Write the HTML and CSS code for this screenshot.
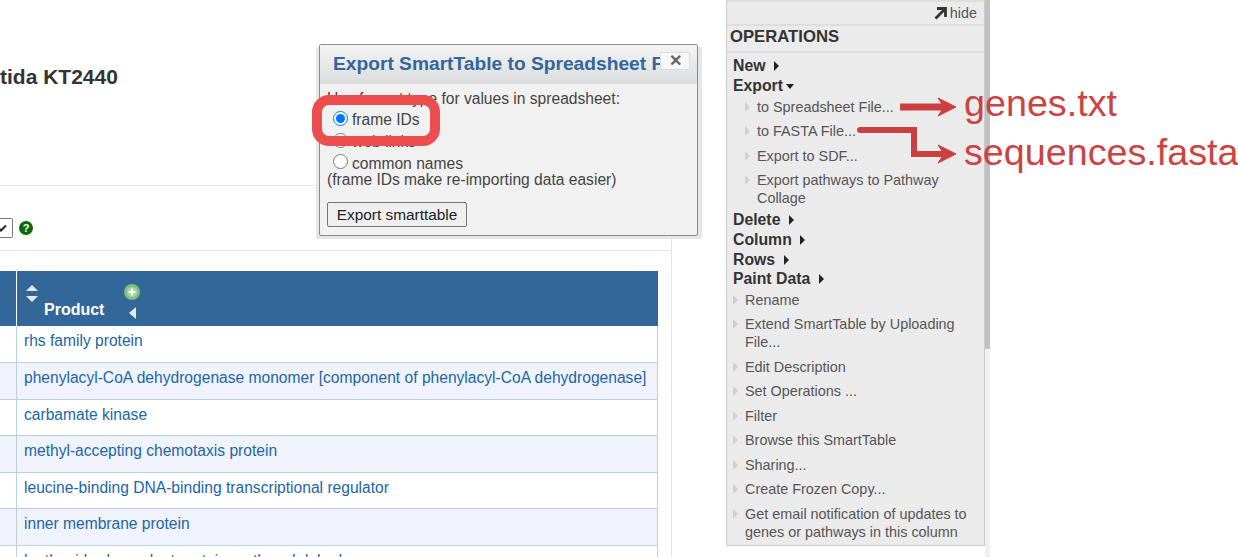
FILE: index.html
```html
<!DOCTYPE html>
<html lang="en">
<head>
    <meta charset="UTF-8">
    <title>Export SmartTable</title>
    <link rel="stylesheet" href="styles.css">
</head>
<body>
    <div class="page">
        <div class="main">
            <h1 class="title">tida KT2440</h1>
            <div class="lower">
                <div class="toolbar">
                    <span class="select-end">
                        <svg width="12" height="18" viewBox="0 0 12 18"><path d="M-1 9.5 1 11.5 6 6.5" fill="none" stroke="#222" stroke-width="2"/></svg>
                    </span>
                    <span class="help">?</span>
                </div>
                <table class="smarttable">
                    <tr>
                        <th class="col-cut"></th>
                        <th class="col-product">
                            <div class="head-cell">
                                <span class="sort">
                                    <span class="sort-up"></span>
                                    <span class="sort-down"></span>
                                </span>
                                <span class="head-name">Product</span>
                                <span class="head-tools">
                                    <span class="add-col">
                                        <svg width="16" height="16" viewBox="0 0 16 16"><circle cx="8" cy="8" r="8" fill="#7fbf7a"/><circle cx="8" cy="8" r="5.2" fill="#a5d69f"/><path d="M8 4.5v7M4.5 8h7" stroke="#fff" stroke-width="2.2"/></svg>
                                    </span>
                                    <span class="move-left"></span>
                                </span>
                            </div>
                        </th>
                    </tr>
                    <tr><td></td><td><a href="#">rhs family protein</a></td></tr>
                    <tr class="alt"><td></td><td><a href="#">phenylacyl-CoA dehydrogenase monomer [component of phenylacyl-CoA dehydrogenase]</a></td></tr>
                    <tr><td></td><td><a href="#">carbamate kinase</a></td></tr>
                    <tr class="alt"><td></td><td><a href="#">methyl-accepting chemotaxis protein</a></td></tr>
                    <tr><td></td><td><a href="#">leucine-binding DNA-binding transcriptional regulator</a></td></tr>
                    <tr class="alt"><td></td><td><a href="#">inner membrane protein</a></td></tr>
                    <tr><td></td><td><a href="#">lanthanide-dependent protein methanol dehydrogenase</a></td></tr>
                </table>
            </div>
        </div>

        <aside class="panel">
            <div class="hide-row">
                <svg width="13" height="13" viewBox="0 0 13 13"><path d="M1.5 11.5 10 3M3 1.5h8.5v8.5" fill="none" stroke="#333" stroke-width="2.8"/></svg>
                <span>hide</span>
            </div>
            <div class="panel-title">OPERATIONS</div>
            <ul class="menu">
                <li class="top">New <span class="tri"></span></li>
                <li class="top">Export <span class="tri-down"></span></li>
                <li class="sub">to Spreadsheet File...</li>
                <li class="sub">to FASTA File...</li>
                <li class="sub">Export to SDF...</li>
                <li class="sub">Export pathways to Pathway Collage</li>
                <li class="top">Delete <span class="tri"></span></li>
                <li class="top">Column <span class="tri"></span></li>
                <li class="top">Rows <span class="tri"></span></li>
                <li class="top">Paint Data <span class="tri"></span></li>
                <li class="item">Rename</li>
                <li class="item">Extend SmartTable by Uploading File...</li>
                <li class="item">Edit Description</li>
                <li class="item">Set Operations ...</li>
                <li class="item">Filter</li>
                <li class="item">Browse this SmartTable</li>
                <li class="item">Sharing...</li>
                <li class="item">Create Frozen Copy...</li>
                <li class="item">Get email notification of updates to genes or pathways in this column</li>
            </ul>
        </aside>
        <div class="scrollbar"><div class="thumb"></div></div>

        <div class="dialog">
            <div class="dialog-head">
                <span class="dialog-title">Export SmartTable to Spreadsheet File</span>
                <button type="button" class="dialog-close">&#x2715;</button>
            </div>
            <div class="dialog-body">
                <div>Use format type for values in spreadsheet:</div>
                <label class="opt"><input type="radio" name="fmt" checked>frame IDs</label>
                <label class="opt"><input type="radio" name="fmt">web links</label>
                <label class="opt"><input type="radio" name="fmt">common names</label>
                <div class="opt-note">(frame IDs make re-importing data easier)</div>
                <button type="button" class="export-btn">Export smarttable</button>
            </div>
        </div>

        <div class="highlight"></div>
        <svg class="arrows" width="1238" height="557" viewBox="0 0 1238 557">
            <path d="M900 107H948" fill="none" stroke="#cc3f40" stroke-width="7"/>
            <path d="M938 98 956 107 938 116 944 107Z" fill="#cc3f40" stroke="#cc3f40" stroke-width="1"/>
            <path d="M860 130H914V154H948" fill="none" stroke="#cc3f40" stroke-width="6" stroke-linecap="round"/>
            <path d="M938 145 956 154 938 163 944 154Z" fill="#cc3f40" stroke="#cc3f40" stroke-width="1"/>
        </svg>
        <div class="note note-genes">genes.txt</div>
        <div class="note note-seq">sequences.fasta</div>
    </div>
</body>
</html>
```

FILE: styles.css
```css
body {
    margin: 0;
    font-family: "Liberation Sans", Arial, sans-serif;
    background-color: #fff;
}
.page {
    position: relative;
    display: flex;
    width: 1238px;
    height: 557px;
    overflow: hidden;
}

/* left column */
.main {
    box-sizing: border-box;
    width: 672px;
    height: 557px;
    padding-top: 65px;
    overflow: hidden;
}
.title {
    height: 120px;
    margin: 0;
    font-size: 21px;
    line-height: 23px;
    color: #333;
    border-bottom: 1px solid #e6e6e6;
}
.lower {
    height: 372px;
    border-right: 1px solid #e3e3e3;
    overflow: hidden;
}
.toolbar {
    display: flex;
    align-items: center;
    gap: 6px;
    height: 65px;
    padding-top: 20px;
    box-sizing: border-box;
    border-bottom: 1px solid #e6e6e6;
}
.select-end {
    display: block;
    box-sizing: border-box;
    width: 13px;
    height: 20px;
    border: 1px solid #777;
    border-left: none;
    border-radius: 0 2px 2px 0;
    overflow: hidden;
}
.help {
    width: 14px;
    height: 14px;
    border-radius: 50%;
    background-color: #0b6a0b;
    color: #fff;
    font-size: 11px;
    font-weight: bold;
    line-height: 14px;
    text-align: center;
}

/* table */
.smarttable {
    width: 658px;
    margin-top: 20px;
    border-collapse: collapse;
    table-layout: fixed;
    font-size: 15.6px;
}
.smarttable th {
    height: 55px;
    padding: 0;
    background-color: #336699;
    color: #fff;
    text-align: left;
}
.col-cut {
    width: 16px;
    border-right: 1px solid #fff;
}
.head-cell {
    display: flex;
    height: 55px;
}
.sort {
    display: flex;
    flex-direction: column;
    gap: 5px;
    padding: 14px 0 0 9px;
}
.sort-up {
    border: 6px solid transparent;
    border-top: none;
    border-bottom: 6px solid #e8e8e8;
}
.sort-down {
    border: 6px solid transparent;
    border-bottom: none;
    border-top: 6px solid #e8e8e8;
}
.head-name {
    margin: 30px 0 0 6px;
    font-size: 16px;
    line-height: 18px;
}
.head-tools {
    display: flex;
    flex-direction: column;
    align-items: center;
    gap: 7px;
    margin: 13px 0 0 20px;
}
.add-col {
    display: block;
    height: 16px;
}
.move-left {
    border: 6px solid transparent;
    border-left: none;
    border-right: 7px solid #e8e8e8;
}
.smarttable td {
    height: 36.5px;
    box-sizing: border-box;
    padding: 6px 7px 0;
    border-bottom: 1px solid #b6d0ea;
    border-left: 1px solid #b6d0ea;
    vertical-align: top;
    line-height: 18px;
    white-space: nowrap;
}
.smarttable td:first-child {
    border-left: none;
    padding: 0;
}
.smarttable td:last-child {
    border-right: 1px solid #b6d0ea;
}
.alt td {
    background-color: #f0f4fa;
}
.smarttable a {
    color: #1d65a8;
    text-decoration: none;
}

/* operations panel */
.panel {
    box-sizing: border-box;
    width: 259px;
    height: 546px;
    margin-left: 54px;
    background-color: #ebebeb;
    border: 1px solid #ccc;
    border-top: 2px solid #dedede;
    color: #555;
    font-size: 14.4px;
}
.hide-row {
    display: flex;
    justify-content: flex-end;
    align-items: center;
    gap: 3px;
    height: 22px;
    padding-right: 7px;
    border-bottom: 2px solid #dedede;
}
.panel-title {
    height: 25px;
    padding-left: 3px;
    font-size: 16.7px;
    font-weight: bold;
    line-height: 22px;
    color: #333;
    border-bottom: 2px solid #dedede;
}
.menu {
    margin: 0;
    padding: 3.5px 0 0;
    list-style: none;
}
.menu li {
    position: relative;
    line-height: 18px;
}
.top {
    padding: 0.8px 0 0.8px 6px;
    font-size: 15.8px;
    font-weight: bold;
    color: #333;
}
.top + .sub {
    margin-top: -1px;
}
.top + .item {
    margin-top: -1.5px;
}
.tri {
    display: inline-block;
    margin-left: 4px;
    vertical-align: 0;
    border: 5px solid transparent;
    border-left: 5px solid #222;
    border-right: none;
}
.tri-down {
    display: inline-block;
    vertical-align: 2px;
    margin-left: -1px;
    border: 4px solid transparent;
    border-top: 5px solid #222;
    border-bottom: none;
}
.sub, .item {
    padding-top: 3.25px;
    padding-bottom: 3.25px;
    padding-right: 10px;
}
.sub { padding-left: 30px; }
.item { padding-left: 18px; }
.sub::before, .item::before {
    content: "";
    position: absolute;
    top: 7px;
    border: 5px solid transparent;
    border-left: 5px solid #cfcfcf;
    border-right: none;
}
.sub::before { left: 18px; }
.item::before { left: 6px; }
.scrollbar {
    width: 5px;
    height: 557px;
    background-color: #f1f1f1;
}
.thumb {
    height: 349px;
    background-color: #c1c1c1;
}

/* export dialog */
.dialog {
    position: absolute;
    left: 319px;
    top: 44px;
    box-sizing: border-box;
    width: 379px;
    height: 192px;
    background-color: #f1f1f1;
    border: 1px solid #8a8a8a;
    border-radius: 2px;
    box-shadow: 4px 3px 0 #e6e6e6, -3px 3px 0 #e6e6e6;
}
.dialog-head {
    position: relative;
    height: 39px;
    background: linear-gradient(#f4f4f4, #dadcde);
    overflow: hidden;
}
.dialog-title {
    display: block;
    padding: 8px 0 0 13px;
    font-size: 19.2px;
    font-weight: bold;
    line-height: 22px;
    color: #336699;
    white-space: nowrap;
}
.dialog-close {
    position: absolute;
    left: 340px;
    top: 7px;
    width: 30px;
    height: 18px;
    padding: 0;
    background-color: #f7f7f7;
    border: 1px solid #ddd;
    border-radius: 2px;
    color: #666;
    font-size: 16px;
    font-weight: bold;
    line-height: 16px;
}
.dialog-body {
    padding: 6px 0 0 7px;
    font-size: 15.6px;
    line-height: 18px;
    color: #444;
}
.opt {
    display: flex;
    align-items: center;
    height: 21.7px;
    margin-left: 5px;
    padding-top: 3px;
    box-sizing: border-box;
}
.opt input {
    width: 15px;
    height: 15px;
    margin: -4px 4px 0 1px;
    accent-color: #0075ff;
}
.opt-note {
    margin-top: -2px;
}
.export-btn {
    display: block;
    width: 140px;
    height: 25px;
    margin-top: 13px;
    padding: 0;
    background-color: #efefef;
    border: 1px solid #767676;
    border-radius: 2px;
    font-family: inherit;
    font-size: 15.4px;
    color: #222;
}

/* annotations on top of the screenshot */
.highlight {
    position: absolute;
    left: 312px;
    top: 95px;
    box-sizing: border-box;
    width: 128px;
    height: 51px;
    border: 10px solid #ec4e50;
    border-radius: 17px;
}
.arrows {
    position: absolute;
    left: 0;
    top: 0;
}
.note {
    position: absolute;
    left: 964px;
    font-size: 37.7px;
    line-height: 42px;
    color: #cc4342;
    white-space: nowrap;
}
.note-genes { top: 82px; }
.note-seq { top: 131px; }
```
